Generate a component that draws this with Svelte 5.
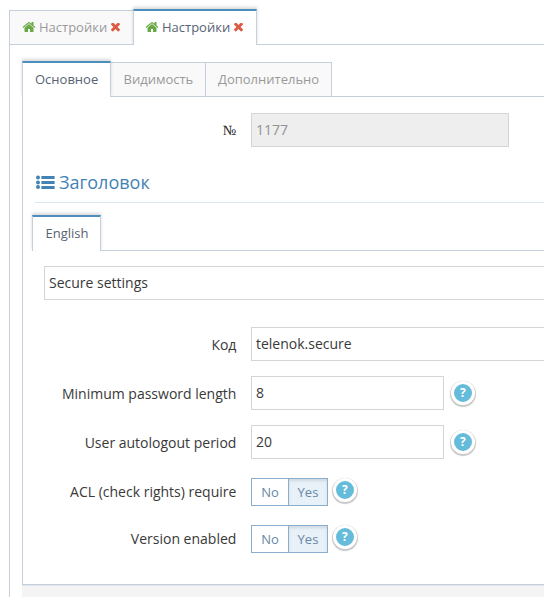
<script>
  const openTabs = [
    { title: 'Настройки', active: false },
    { title: 'Настройки', active: true }
  ];
  const sections = [
    { title: 'Основное', width: 89 },
    { title: 'Видимость', width: 94 },
    { title: 'Дополнительно', width: 127 }
  ];
  const numbers = [
    { label: 'Minimum password length', value: '8' },
    { label: 'User autologout period', value: '20' }
  ];
  const switches = ['ACL (check rights) require', 'Version enabled'];
</script>

{#snippet help()}
  <span class="help">?</span>
{/snippet}

<div class="page">
  <div class="tabs outer-tabs">
    {#each openTabs as tab}
      <div class="tab" class:active={tab.active}>
        <svg class="home" width="14" height="14" viewBox="0 0 1792 1792"><path d="M1472 992v480q0 26-19 45t-45 19h-384v-384h-256v384h-384q-26 0-45-19t-19-45v-480q0-1 .5-3t.5-3l575-474 575 474q1 2 1 6zm223-69l-62 74q-8 9-21 11h-3q-13 0-21-7l-692-577-692 577q-12 8-24 7-13-2-21-11l-62-74q-8-10-7-23.5t11-21.5l719-599q32-26 76-26t76 26l244 204v-195q0-14 9-23t23-9h192q14 0 23 9t9 23v408l219 182q10 8 11 21.5t-7 23.5z" /></svg>
        <span class="name">{tab.title}</span>
        <svg class="close" width="9" height="9" viewBox="302 434 1188 1188"><path d="M1490 1322q0 40-28 68l-136 136q-28 28-68 28t-68-28l-294-294-294 294q-28 28-68 28t-68-28l-136-136q-28-28-28-68t28-68l294-294-294-294q-28-28-28-68t28-68l136-136q28-28 68-28t68 28l294 294 294-294q28-28 68-28t68 28l136 136q28 28 28 68t-28 68l-294 294 294 294q28 28 28 68z" /></svg>
      </div>
    {/each}
  </div>

  <div class="outer">
    <div class="tabs">
      {#each sections as s, i}
        <div class="tab" class:active={i === 0} style="width: {s.width}px">{s.title}</div>
      {/each}
    </div>

    <div class="panel">
      <div class="row">
        <span class="label numero">№</span>
        <div class="field wide disabled">1177</div>
      </div>

      <h4>
        <svg width="19" height="14" viewBox="0 0 19 14">
          <circle cx="2" cy="2.5" r="2" /><circle cx="2" cy="7.5" r="2" /><circle cx="2" cy="12" r="2" />
          <rect x="5.4" y="1" width="13.2" height="3" /><rect x="5.4" y="6" width="13.2" height="3" /><rect x="5.4" y="11" width="13.2" height="3" />
        </svg>
        <span>Заголовок</span>
      </h4>

      <div class="tabs lang">
        <div class="tab active">English</div>
      </div>
      <div class="field title">Secure settings</div>

      <div class="row">
        <span class="label">Код</span>
        <div class="field full">telenok.secure</div>
      </div>
      {#each numbers as n}
        <div class="row">
          <span class="label">{n.label}</span>
          <div class="field short">{n.value}</div>
          {@render help()}
        </div>
      {/each}
      {#each switches as s}
        <div class="row switch">
          <span class="label">{s}</span>
          <div class="toggle"><span class="no">No</span><span class="yes">Yes</span></div>
          {@render help()}
        </div>
      {/each}
    </div>
    <div class="footer"></div>
  </div>
</div>

<style>
  .page {
    box-sizing: border-box;
    width: 544px;
    height: 597px;
    padding: 10px 0 0 9px;
    overflow: hidden;
    background: #fff;
    color: #393939;
    font: 14px/20px "Open Sans", sans-serif;
  }
  .page * { box-sizing: border-box; }
  .tabs {
    display: flex;
    height: 35px;
    border-bottom: 1px solid #c5d0dc;
  }
  .tab {
    display: flex;
    align-items: center;
    height: 34px;
    padding: 0 12px 2px;
    border: 1px solid #c5d0dc;
    border-right-width: 0;
    border-bottom: 0;
    background: #f9f9f9;
    color: #999;
    font-size: 13px;
    white-space: nowrap;
  }
  .tab:last-child { border-right-width: 1px; }
  .tab.active {
    position: relative;
    z-index: 1;
    height: 36px;
    margin-top: -1px;
    border-top: 2px solid #4c8fbd;
    border-right-width: 1px;
    background: #fff;
    color: #576373;
    box-shadow: 0 -2px 3px 0 rgba(0, 0, 0, .15);
  }
  .tab.active + .tab { border-left: 0; padding-left: 12.5px; }
  .outer-tabs .tab { width: 124px; }
  .outer-tabs .tab.active { padding-left: 11px; }
  .home { flex: none; fill: #69aa46; }
  .name { margin-left: 3px; }
  .close { flex: none; margin: 1px 0 0 4px; fill: #dd5a43; }
  .outer {
    height: 552px;
    padding: 17px 0 0 12px;
    border-left: 1px solid #c5d0dc;
  }
  .panel {
    height: 488px;
    padding-top: 16px;
    border-left: 1px solid #c5d0dc;
    border-bottom: 1px solid #c5d0dc;
  }
  .footer {
    height: 12px;
    border-top: 1px solid #e0e5eb;
    background: #f4f4f4;
  }
  .row {
    display: flex;
    height: 34px;
    margin-bottom: 15px;
  }
  .label {
    width: 213.4px;
    margin-right: 14.6px;
    padding-top: 8px;
    text-align: right;
    white-space: nowrap;
  }
  .numero { font-family: "Liberation Serif", serif; color: #222; }
  .field {
    height: 34px;
    padding: 6px 4px;
    border: 1px solid #d5d5d5;
    background: #fff;
  }
  .wide { width: 258px; }
  .full { flex: 1; border-right: 0; }
  .short { width: 193px; }
  .disabled { background: #eee; color: #939192; }
  h4 {
    display: flex;
    align-items: center;
    height: 41px;
    margin: 0 0 0 12px;
    padding: 0 0 0 1px;
    border-bottom: 1px solid #dce8f1;
    color: #4383b4;
    font-size: 18px;
    font-weight: 400;
    line-height: 24px;
  }
  h4 svg { margin-right: 4px; fill: #4383b4; }
  .lang { margin: 13px 0 15px 9px; }
  .lang .tab { width: 69px; padding-left: 12.5px; }
  .title { margin: 0 0 27px 21px; border-right: 0; }
  .help {
    width: 24px;
    height: 24px;
    margin: 5px 0 0 7px;
    border: 3px solid #fff;
    border-radius: 50%;
    background: #65bcda;
    color: #fff;
    box-shadow: 0 1px 1px 1px rgba(0, 0, 0, .22);
    font-size: 12px;
    font-weight: 700;
    line-height: 18px;
    text-align: center;
  }
  .switch { height: 28px; margin: 19px 0; }
  .switch .label { padding-top: 4px; }
  .switch .help { margin: 0 0 0 5px; }
  .toggle {
    display: flex;
    width: 77px;
    height: 28px;
    border: 1px solid #8aafce;
    color: #6688a6;
    font-size: 13px;
    line-height: 27px;
    text-align: center;
  }
  .no { width: 36px; }
  .yes {
    flex: 1;
    border-left: 1px solid #8aafce;
    background: #e8f0f8;
    box-shadow: inset 0 2px 3px rgba(0, 0, 0, .1);
  }
</style>
